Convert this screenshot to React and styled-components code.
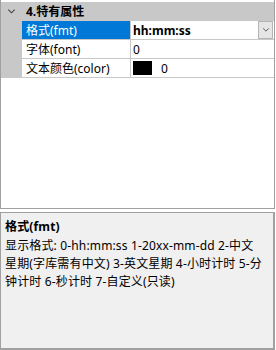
import React from 'react'
import styled, { createGlobalStyle } from 'styled-components'

const Global = createGlobalStyle`
  body {
    margin: 0;
    background: #fff;
    font-family: "Noto Sans", "Noto Sans CJK SC", sans-serif;
    font-size: 12px;
    color: #000;
  }
`

const Page = styled.div`
  width: 275px;
  height: 350px;
  display: flex;
  flex-direction: column;
  gap: 3px;
`

const Grid = styled.div`
  height: 209px;
  box-sizing: border-box;
  border: 1px solid #a0a0a0;
  border-top: none;
  padding-top: 2px;
  display: flex;
  flex-direction: column;
`

const Category = styled.div`
  height: 18px;
  background: #c8c8c8;
  border-bottom: 1px solid #c8c8c8;
  display: flex;
  align-items: center;
  font-weight: bold;
`

const Toggle = styled.div`
  width: 21px;
  display: flex;
  justify-content: center;
  align-items: center;
`

const Row = styled.div`
  height: 18px;
  display: flex;
  border-bottom: 1px solid #c8c8c8;
`

const Gutter = styled.div`
  width: 21px;
  background: #c8c8c8;
`

const Name = styled.div`
  width: 104px;
  padding-left: 4px;
  border-right: 1px solid #c8c8c8;
  display: flex;
  align-items: center;
  background: ${p => (p.$selected ? '#0078d7' : '#fff')};
  color: ${p => (p.$selected ? '#fff' : '#000')};
  white-space: nowrap;
`

const Value = styled.div`
  flex: 1;
  display: flex;
  align-items: center;
  padding-left: 2px;
  gap: 9px;
  font-weight: ${p => (p.$bold ? 'bold' : 'normal')};
`

const ValueText = styled.span`
  flex: 1;
`

const DropButton = styled.div`
  width: 13px;
  height: 16px;
  margin-right: 1px;
  background: #e5e5e5;
  border: 1px solid #b4b4b4;
  display: flex;
  align-items: center;
  justify-content: center;
`

const Swatch = styled.div`
  width: 19px;
  height: 14px;
  background: #000;
`

const Desc = styled.div`
  flex: 1;
  box-sizing: border-box;
  border: 1px solid #a0a0a0;
  border-width: 1px 2px 2px 1px;
  background: #f0f0f0;
  padding: 5px 11px 3px 4px;
  line-height: 18px;
  letter-spacing: 0.15px;
`

const DescTitle = styled.div`
  font-weight: bold;
  margin-bottom: 1px;
`

const Chevron = ({ size = 9, color = '#404040' }) => (
  <svg width={size} height={size} viewBox="0 0 10 10">
    <path d="M1.5 3 L5 6.5 L8.5 3" fill="none" stroke={color} strokeWidth="1.2" />
  </svg>
)

export default function App() {
  return (
    <Page>
      <Global />
      <Grid>
        <Category>
          <Toggle><Chevron /></Toggle>
          <span style={{ paddingLeft: 4 }}>4.特有属性</span>
        </Category>
        <Row>
          <Gutter />
          <Name $selected>格式(fmt)</Name>
          <Value $bold>
            <ValueText>hh:mm:ss</ValueText>
            <DropButton><Chevron size={8} color="#555" /></DropButton>
          </Value>
        </Row>
        <Row>
          <Gutter />
          <Name>字体(font)</Name>
          <Value>0</Value>
        </Row>
        <Row>
          <Gutter />
          <Name>文本颜色(color)</Name>
          <Value><Swatch />0</Value>
        </Row>
      </Grid>
      <Desc>
        <DescTitle>格式(fmt)</DescTitle>
        显示格式: 0-hh:mm:ss 1-20xx-mm-dd 2-中文星期(字库需有中文) 3-英文星期 4-小时计时 5-分钟计时 6-秒计时 7-自定义(只读)
      </Desc>
    </Page>
  )
}
